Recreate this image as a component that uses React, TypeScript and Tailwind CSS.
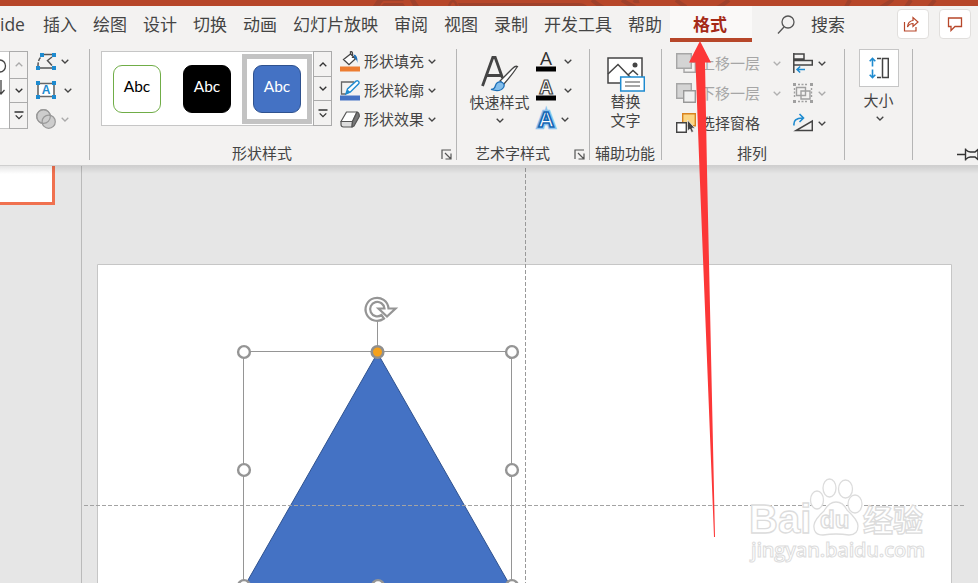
import React from 'react';

const tabs = ['插入', '绘图', '设计', '切换', '动画', '幻灯片放映', '审阅', '视图', '录制', '开发工具', '帮助'];

const Chevron: React.FC<{ up?: boolean; className?: string }> = ({ up, className = 'text-[#444]' }) => (
  <svg className={`h-[5px] w-2 shrink-0 ${className}`} viewBox="0 0 8 5" fill="none" stroke="currentColor" strokeWidth="1.3">
    <path d={up ? 'M.7 4.3 4 1l3.3 3.3' : 'M.7.7 4 4 7.3.7'} />
  </svg>
);

const More = () => (
  <svg className="h-[9px] w-[10px]" viewBox="0 0 10 9" fill="none" stroke="#333" strokeWidth="1.3">
    <path d="M.5 1h9M1.700 4.400 5 7.700l3.300-3.300" />
  </svg>
);

const Launcher = () => (
  <svg className="absolute bottom-0 right-1 h-[11px] w-[11px]" viewBox="0 0 11 11" fill="none" stroke="#555" strokeWidth="1.2">
    <path d="M1 10V1h9M4 4l5.500 5.500M10 4.500v5.500H4.500" />
  </svg>
);

const Group: React.FC<{ title?: string; launcher?: boolean; className: string; titleClass?: string; children?: React.ReactNode }> = ({
  title,
  launcher,
  className,
  titleClass = '',
  children,
}) => (
  <section className={`relative flex h-[111px] shrink-0 flex-col border-r border-[#b5b5b5] ${className}`}>
    <div className="flex h-[97px]">{children}</div>
    <div className={`h-[14px] whitespace-nowrap leading-[14px] ${titleClass}`}>{title}</div>
    {launcher && <Launcher />}
  </section>
);

const GalleryScroll: React.FC<{ faded?: boolean; className?: string }> = ({ faded, className = '' }) => (
  <div className={`flex w-[19px] shrink-0 flex-col border border-[#ababab] bg-[#f3f2f1] ${className}`}>
    <div className="flex flex-1 items-center justify-center"><Chevron up className={faded ? 'text-[#aaa]' : 'text-[#333]'} /></div>
    <div className="flex h-[25px] items-center justify-center border-y border-[#ababab]"><Chevron className="text-[#333]" /></div>
    <div className="flex flex-1 items-center justify-center"><More /></div>
  </div>
);

const EditShapeIcon = () => (
  <svg className="h-[17px] w-5" viewBox="0 0 20 17" fill="none" stroke="#555" strokeWidth="1.5">
    <path d="M8 1.500h8M16 4l-4.500 3.500L16 12.500M4 15h12" />
    <path d="M4.500 4.500Q2 7 2 13" strokeDasharray="4 1.500" />
    <path d="M4 0h4v4H4zM16 0h4v4h-4zM0 13h4v4H0zM16 13h4v4h-4z" fill="#1e8bd0" stroke="none" />
  </svg>
);

const TextBoxIcon = () => (
  <svg className="h-[18px] w-5" viewBox="0 0 20 18">
    <path d="M2 2.500h16v13H2z" fill="#fff" stroke="#666" strokeWidth="1.600" />
    <path d="M0 0h4v4H0zM16 0h4v4h-4zM0 14h4v4H0zM16 14h4v4h-4z" fill="#1e8bd0" />
    <text x="10" y="13" textAnchor="middle" fontSize="12" fontWeight="700" fill="#1e8bd0" fontFamily="Liberation Sans, sans-serif">A</text>
  </svg>
);

const MergeIcon = () => (
  <svg className="h-5 w-5" viewBox="0 0 20 20" fill="#cdcdcd" stroke="#999" strokeWidth="1.200">
    <circle cx="7.500" cy="7.500" r="6.800" />
    <circle cx="12.700" cy="12.700" r="6.600" />
    <circle cx="7.500" cy="7.500" r="6.800" fill="none" />
  </svg>
);

const FillIcon = () => (
  <svg className="h-[21px] w-5" viewBox="0 0 20 21" fill="none">
    <path d="M10.500 3 3.500 8.500l5.500 5.200 6.500-6L10.500 3V.8Q12.500 0 12.500 3v4" fill="#fff" stroke="#444" strokeWidth="1.300" />
    <path d="M13.500 3.500q4.500 0 4 8.500-1-4-2.800-4.500z" fill="#1e70b8" />
    <path d="M0 15.500h20v5H0z" fill="#ed7d31" />
  </svg>
);

const OutlineIcon = () => (
  <svg className="h-[21px] w-5" viewBox="0 0 20 21" fill="none">
    <path d="M14 2H1.500v12H6" stroke="#666" strokeWidth="1.300" />
    <path d="m6 14 1.500-5L16 1.200q2-1 2.800.6.6 1.200-.4 2.200l-8 8z" fill="#fff" stroke="#1e8bd0" strokeWidth="1.400" />
    <path d="m6 14 1.500-4.500 3 2.700z" fill="#1e8bd0" />
    <path d="M0 15.500h20v5H0z" fill="#4472c4" />
  </svg>
);

const EffectIcon = () => (
  <svg className="h-[17px] w-5" viewBox="0 0 20 17" stroke="#555" strokeWidth="1.200" strokeLinejoin="round">
    <path d="M6.500 1H17l-4.500 9.500H1z" fill="#fff" />
    <path d="M1 10.500h11.500l-.5 5.500H3.500Q1 16 1 13.500z" fill="#ddd" />
    <path d="M17 1q2.500.5 2.300 4.500L14 15l-2 1 .5-5.500z" fill="#777" />
  </svg>
);

const QuickStyleIcon = () => (
  <svg className="h-9 w-[38px]" viewBox="0 0 38 36" fill="none">
    <path d="M1.500 30 11.800 1.500h2.400L21.500 22M5.500 19.500h14" stroke="#444" strokeWidth="2.800" />
    <path d="M36.500 10.500q-2-1-5 2L19 25l3.500 3.500Q31 19 36.500 10.500z" fill="#fff" stroke="#444" strokeWidth="1.300" />
    <path d="M10 33.500q3.500 0 4.500-4 1.500-4.500 6-3.500 4 2 2 5.500-3.500 5-12.500 2z" fill="#83beec" stroke="#1e70b8" strokeWidth="1.300" />
  </svg>
);

const FontAIcon: React.FC<{ kind: 'fill' | 'outline' | 'glow' }> = ({ kind }) => (
  <svg className="h-[21px] w-5 overflow-visible" viewBox="0 0 20 21" fontFamily="Open Sans, sans-serif">
    {kind === 'fill' && <text x="10" y="13.500" textAnchor="middle" fontSize="19" fill="#333">A</text>}
    {kind === 'outline' && (
      <text x="10" y="13.500" textAnchor="middle" fontSize="19" fontWeight="700" fill="#fff" stroke="#444" strokeWidth="1.200">A</text>
    )}
    {kind === 'glow' && (
      <>
        <text x="10" y="18" textAnchor="middle" fontSize="22" fontWeight="700" fill="none" stroke="#8cc3ee" strokeWidth="4.500">A</text>
        <text x="10" y="18" textAnchor="middle" fontSize="22" fontWeight="700" fill="#fff" stroke="#1568b5" strokeWidth="1.700">A</text>
      </>
    )}
    {kind !== 'glow' && <path d="M0 15.500h20v5H0z" fill="#000" />}
  </svg>
);

const AltTextIcon = () => (
  <svg className="h-[35px] w-[38px]" viewBox="0 0 38 35" fill="none" stroke="#444" strokeWidth="1.500">
    <path d="M1 1h34v25H1z" fill="#fff" />
    <path d="m1 17 10-9.500L24 21m-3-3 5-4.500 5 4.500" />
    <circle cx="28" cy="8" r="2.500" fill="#444" stroke="none" />
    <path d="M13.700 20h23.600v14H13.700z" fill="#fff" stroke="#1e8bd0" />
    <path d="M18 25h15M18 29h15" stroke="#888" />
  </svg>
);

const ForwardIcon = () => (
  <svg className="h-5 w-5" viewBox="0 0 20 20" fill="none" stroke="#a6a6a6" strokeWidth="1.400">
    <path d="M.7.700h14.600v14.600H.7z" fill="#d4d4d4" />
    <path d="M8 16v3.300h11.300V9H16" />
  </svg>
);

const BackwardIcon = () => (
  <svg className="h-5 w-5" viewBox="0 0 20 20" fill="none" stroke="#a6a6a6" strokeWidth="1.400">
    <path d="M.7.700h14.600v14.600H.7z" fill="#d4d4d4" />
    <path d="M7.700 7.700h11.600v11.600H7.700z" fill="#f0f0f0" stroke="#999" />
  </svg>
);

const SelectionPaneIcon = () => (
  <svg className="h-5 w-5" viewBox="0 0 20 20" strokeWidth="1.400">
    <path d="M6.700.700h12.600v12H6.700z" fill="#fbd583" stroke="#d9831f" />
    <path d="M.7 9.700h9.600v9.600H.7z" fill="#fff" stroke="#444" />
    <path d="M11.500 7v11l2.500-2 1.500 3.500 2-1-1.500-3.300h3z" fill="#444" stroke="#f3f2f1" strokeWidth=".7" />
  </svg>
);

const AlignIcon = () => (
  <svg className="h-5 w-5" viewBox="0 0 20 20" fill="none" stroke="#444" strokeWidth="1.500">
    <path d="M.8 0v20M1 1h10v5H1M1 7.500h18.300v4.500H1" />
    <path d="M12 16.500H4m3.200-3L4 16.500l3.200 3" stroke="#1e8bd0" />
  </svg>
);

const GroupIcon = () => (
  <svg className="h-5 w-5" viewBox="0 0 20 20" fill="none" stroke="#a0a0a0" strokeWidth="1.400">
    <path d="M1.500 5v10M5 1.500h10M18.500 5v10M5 18.500h10" strokeDasharray="2 1.500" />
    <path d="M3.500 4.500h9v8h-9zM8 8h9v8H8z" />
    <path d="M0 0h3v3H0zM17 0h3v3h-3zM0 17h3v3H0zM17 17h3v3h-3z" fill="#a0a0a0" stroke="none" />
  </svg>
);

const RotateIcon = () => (
  <svg className="h-5 w-5" viewBox="0 0 20 20" fill="none" stroke="#444" strokeWidth="1.500">
    <path d="M3 17.500h16.300V8z" />
    <path d="M1 12.500Q0 5 9.500 5M6.500 1l4 4-4 4" stroke="#1e8bd0" strokeWidth="1.600" />
  </svg>
);

const SizeIcon = () => (
  <svg className="h-[22px] w-5" viewBox="0 0 20 22" fill="none">
    <path d="M3.500 1.500v8M.7 4.300l2.800-3 2.800 3M3.500 12.500v8M.7 17.700l2.800 3 2.800-3" stroke="#1e8bd0" strokeWidth="1.600" />
    <path d="M8 1.500h4M8 20.500h4M13.500 1.500h5.800v19h-5.800z" stroke="#444" strokeWidth="1.500" />
  </svg>
);

const StyleSwatch: React.FC<{ className: string }> = ({ className }) => (
  <div className={`flex size-12 items-center justify-center rounded-[9px] border pb-1 font-[Lato,sans-serif] text-[15.5px] ${className}`}>Abc</div>
);

const TitleStrip = () => (
  <svg className="block h-1.5 w-full bg-[#b7472a]" viewBox="0 0 978 6" fill="none" stroke="#9f412b" strokeWidth="5">
    <path d="M373 6q2-3 4-6h7q-3 3-4 6zM383 0h20l1 1h-21zM384 3h19l2 3h-24zM410 0h5l4 6h-6z" fill="#9f412b" stroke="none" />
    <path d="M449 6q4-10 8 0" strokeWidth="2.500" />
    <path d="M458 3h120q6 0 9 3H459z" fill="#9f412b" stroke="none" />
    <path d="M592 0q6 5 12 8M622 0q8 5 13 7M676 0q5 4 10 7M634 0q2 2 5 1M729 0q-6 5-12 8M850 0l-4 7M892 0q0 1-12 8M911 0l-5 7M935 0l-6 7" strokeWidth="4" />
  </svg>
);

const TabRow = () => (
  <nav className="flex h-9 items-center bg-[#f3f2f1] text-[17px] text-[#444]">
    <span className="w-[43px] shrink-0 font-['Open_Sans',sans-serif] text-[17.5px]">ide</span>
    <div className="flex w-[627px] shrink-0 gap-4 whitespace-nowrap">
      {tabs.map((t) => <span key={t}>{t}</span>)}
    </div>
    <div className="flex h-9 w-[82px] shrink-0 items-center justify-center border-b-4 border-[#b7472a] bg-[#faf9f8] pr-0.5 pt-[3px] font-bold text-[#a52a17]">格式</div>
    <div className="ml-[25px] flex w-[120px] items-center gap-4">
      <svg className="h-[19px] w-[18px]" viewBox="0 0 18 19" fill="none" stroke="#555" strokeWidth="1.300">
        <circle cx="11" cy="7" r="6" />
        <path d="m7 12-6 6.500" />
      </svg>
      <span>搜索</span>
    </div>
    <div className="flex gap-2.5">
      <button className="flex h-[30px] w-8 items-center justify-center rounded border border-[#e1dfdd] bg-white">
        <svg className="size-4 -translate-x-0.5" viewBox="0 0 16 16" fill="none" stroke="#b7472a" strokeWidth="1.200">
          <path d="M1.500 6v9h11.500v-4M4.500 11q.5-6 5.500-6.500V1.500L15 6l-5 4.500V7.500q-3.500 0-5.500 3.500z" />
        </svg>
      </button>
      <button className="flex h-[30px] w-8 items-center justify-center rounded border border-[#e1dfdd] bg-white">
        <svg className="size-4" viewBox="0 0 16 16" fill="none" stroke="#b7472a" strokeWidth="1.300">
          <path d="M1.500 2h13v8.500H8L4 14.500v-4H1.500z" />
        </svg>
      </button>
    </div>
  </nav>
);

const Ribbon = () => (
  <div className="relative flex h-[124px] border-b border-[#cfcfcf] bg-[#f3f2f1] pt-[7px] text-[15px] text-[#444]">
    <Group className="w-[90px]">
      <div className="mt-0.5 flex h-[78px] w-7 border-y border-[#c6c6c6] bg-white">
        <svg className="h-[76px] w-[9px]" viewBox="0 0 9 76" fill="none" stroke="#444" strokeWidth="1.300">
          <ellipse cx="0" cy="14" rx="5.500" ry="6" />
          <path d="M1 28v14M-3 38l4 4 3.500-4" />
        </svg>
        <GalleryScroll faded className="-my-px" />
      </div>
      <div className="ml-2 flex flex-col gap-[5px]">
        <div className="flex h-6 items-center gap-[5px]"><EditShapeIcon /><Chevron /></div>
        <div className="flex h-6 items-center gap-2"><TextBoxIcon /><Chevron /></div>
        <div className="flex h-6 items-center gap-[5px]"><MergeIcon /><Chevron className="text-[#aaa]" /></div>
      </div>
    </Group>

    <Group title="形状样式" launcher className="w-[367px]" titleClass="pl-[142px]">
      <div className="ml-[11px] mt-0.5 flex h-[75px] w-[231px] items-center border border-r-0 border-[#c6c6c6] bg-white">
        <StyleSwatch className="ml-[11px] border-[#70ad47] text-black" />
        <StyleSwatch className="ml-[22px] border-black bg-black text-white" />
        <div className="ml-[11px] flex size-[70px] shrink-0 items-center justify-center border-[5px] border-[#c3c3c3]">
          <StyleSwatch className="border-[#2f528f] bg-[#4472c4] text-white" />
        </div>
        <GalleryScroll className="-my-px ml-auto h-[75px]" />
      </div>
      <div className="ml-2 flex flex-col gap-[5px] whitespace-nowrap">
        <div className="flex h-6 items-center gap-1"><FillIcon /><span>形状填充</span><Chevron /></div>
        <div className="flex h-6 items-center gap-1"><OutlineIcon /><span>形状轮廓</span><Chevron /></div>
        <div className="flex h-6 items-center gap-1"><EffectIcon /><span>形状效果</span><Chevron /></div>
      </div>
    </Group>

    <Group title="艺术字样式" launcher className="w-[133px]" titleClass="pl-[18px]">
      <div className="ml-3 flex w-[61px] flex-col items-center pt-[7px]">
        <QuickStyleIcon />
        <span className="mb-1.5 whitespace-nowrap leading-[20px]">快速样式</span>
        <Chevron />
      </div>
      <div className="ml-1.5 flex flex-col gap-[5px]">
        <div className="flex h-6 items-center gap-2"><FontAIcon kind="fill" /><Chevron /></div>
        <div className="flex h-6 items-center gap-2"><FontAIcon kind="outline" /><Chevron /></div>
        <div className="flex h-6 items-center gap-[5px]"><FontAIcon kind="glow" /><Chevron /></div>
      </div>
    </Group>

    <Group title="辅助功能" className="w-[72px]" titleClass="pl-[5px]">
      <div className="flex w-full flex-col items-center pt-2 leading-[19px]">
        <AltTextIcon />
        <span className="-mt-px">替换</span>
        <span>文字</span>
      </div>
    </Group>

    <Group title="排列" className="w-[183px]" titleClass="pl-[75px]">
      <div className="ml-3.5 flex w-[117px] flex-col gap-0.5 whitespace-nowrap">
        <div className="flex h-7 items-center text-[#a6a6a6]"><ForwardIcon /><span className="ml-1">上移一层</span><Chevron className="ml-[13px] text-[#b0b0b0]" /></div>
        <div className="flex h-7 items-center text-[#a6a6a6]"><BackwardIcon /><span className="ml-1">下移一层</span><Chevron className="ml-[13px] text-[#b0b0b0]" /></div>
        <div className="flex h-7 items-center"><SelectionPaneIcon /><span className="ml-1">选择窗格</span></div>
      </div>
      <div className="flex flex-col gap-0.5">
        <div className="flex h-7 items-center gap-[5px]"><AlignIcon /><Chevron /></div>
        <div className="flex h-7 items-center gap-[5px]"><GroupIcon /><Chevron className="text-[#aaa]" /></div>
        <div className="flex h-7 items-center gap-[5px]"><RotateIcon /><Chevron /></div>
      </div>
    </Group>

    <Group className="w-[68px]">
      <div className="flex w-full flex-col items-center">
        <div className="flex h-[38px] w-10 items-center justify-center border border-[#c6c6c6] bg-white"><SizeIcon /></div>
        <span className="mb-1.5 mt-[3px] leading-[20px]">大小</span>
        <Chevron className="ml-0.5" />
      </div>
    </Group>

    <div className="flex flex-1 items-end justify-end pb-1">
      <svg className="h-[13px] w-[21px]" viewBox="0 0 21 13" fill="none" stroke="#333" strokeWidth="1.400">
        <path d="M0 6.500h8M8.500.5v12M8.500 1.500q3 3 5.500 2.500h4l3-2.500v10L18 9h-4q-2.500-.5-5.500 2.500" />
      </svg>
    </div>
  </div>
);

// Selection handles around the triangle
const handles = [
  [244, 352], [512, 352], [244, 470], [512, 470], [244, 586], [378, 586], [512, 586],
];

const Canvas = () => (
  <svg className="block h-full w-full" viewBox="82 166 896 417" fill="none">
    <path d="M97.500 583V264.500H951.500V583" fill="#fff" stroke="#c6c6c6" />
    <path d="M377.500 353 243.500 588h268z" fill="#4472c4" stroke="#2f528f" />
    <path d="M525.500 168v415" stroke="#999" strokeDasharray="4 2" />
    <path d="M84 505.500h880" stroke="#a3a3a3" strokeDasharray="4 2" />
    <path d="M243.500 583V351.500h268V583M377.500 351V322" stroke="#959595" />
    {handles.map(([x, y]) => (
      <circle key={`${x}-${y}`} cx={x} cy={y} r="5.900" fill="#fff" stroke="#959595" strokeWidth="2.400" />
    ))}
    <circle cx="377.500" cy="352" r="5.800" fill="#f5a11c" stroke="#8f8f8f" strokeWidth="2.600" />
    <path
      d="M388.500 308.500A11.500 11.500 0 1 0 384 318.500l-2.500-3.500A7.200 7.200 0 1 1 384.500 308.500h-6l8.500 8 8.500-8z"
      fill="#fff"
      stroke="#959595"
      strokeWidth="2.200"
    />
    <g fill="#fff" stroke="#dcdcdc" strokeWidth="1.300" fontFamily="Liberation Sans, sans-serif" fontWeight="700">
      <ellipse cx="817" cy="500" rx="6.500" ry="9" />
      <ellipse cx="829.500" cy="488" rx="6.500" ry="9" />
      <ellipse cx="845.500" cy="489" rx="7" ry="9" />
      <ellipse cx="855" cy="504" rx="7" ry="9" />
      <path d="M836 502q7 0 11 8 11 10 11 16 0 9-9 9-13-2-26 0-10 0-9-10 1-6 10-14 5-9 12-9z" />
      <text x="749" y="532.500" fontSize="40">Bai</text>
      <text x="820" y="528" fontSize="24">du</text>
      <text x="863" y="531" fontSize="30" fontFamily="Noto Sans CJK SC, sans-serif">经验</text>
      <text x="751" y="557" fontSize="20" textLength="174" strokeWidth="1" fontFamily="Open Sans, sans-serif" fontWeight="600">jingyan.baidu.com</text>
    </g>
  </svg>
);

const App: React.FC = () => {
  return (
    <div className="relative flex h-[583px] w-[978px] flex-col overflow-hidden bg-[#e6e6e6] font-['Noto_Sans_CJK_SC',sans-serif]">
      <TitleStrip />
      <TabRow />
      <Ribbon />
      <main className="relative flex flex-1">
        <aside className="w-[82px] shrink-0 border-r border-[#bababa]">
          <div className="h-[39px] w-[55px] border-b-[3px] border-r-[3px] border-[#f0714f] bg-white" />
        </aside>
        <div className="flex-1"><Canvas /></div>
        <div className="absolute inset-x-0 top-0 h-2 bg-linear-to-b from-black/10 to-transparent" />
      </main>
      {/* Pointer to the format tab */}
      <svg className="absolute left-[685px] top-10 h-[500px] w-[34px]" viewBox="685 40 34 500">
        <path d="m700 41 11 21.500h-6l2 107.500 8 367h-1l-14.500-367-4-107.500H689z" fill="#fc3737" />
      </svg>
    </div>
  );
};

export default App;
